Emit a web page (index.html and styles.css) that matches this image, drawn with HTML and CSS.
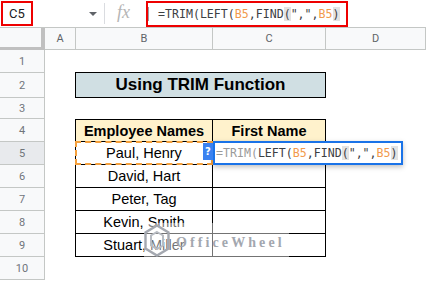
FILE: index.html
```html
<!DOCTYPE html>
<html lang="en">

<head>
    <meta charset="UTF-8" />
    <title>Using TRIM Function</title>
    <link rel="stylesheet" href="styles.css">
</head>

<body>

    <!-- formula bar -->
    <div class="toolbar">
        <div class="namebox">C5</div>
        <span class="caret"></span>
        <span class="divider"></span>
        <span class="fx">fx</span>
        <div class="formula">
            <span class="bar"></span>
            <span class="code">=TRIM(LEFT(<b class="ref">B5</b>,FIND<i class="hl">(</i>",",<b class="ref">B5</b><i class="hl">)</i></span>
        </div>
    </div>

    <!-- sheet grid -->
    <div class="sheet">
        <div class="corner"></div>
        <div class="colhead">A</div>
        <div class="colhead">B</div>
        <div class="colhead">C</div>
        <div class="colhead">D</div>

        <div class="rowhead">1</div>
        <div class="cell"></div><div class="cell"></div><div class="cell"></div><div class="cell"></div>

        <div class="rowhead">2</div>
        <div class="cell"></div>
        <div class="title">Using TRIM Function</div>
        <div class="cell"></div>

        <div class="rowhead">3</div>
        <div class="cell"></div><div class="cell"></div><div class="cell"></div><div class="cell"></div>

        <div class="rowhead">4</div>
        <div class="cell"></div>
        <div class="cell tb th first">Employee Names</div>
        <div class="cell tb th">First Name</div>
        <div class="cell"></div>

        <div class="rowhead active">5</div>
        <div class="cell"></div>
        <div class="cell tb first copied">Paul, Henry</div>
        <div class="cell tb editing">
            <div class="popup">
                <span class="help">?</span>
                <span class="code"><span class="muted">=TRIM(</span>LEFT(<b class="ref">B5</b>,FIND<i class="hl">(</i>",",<b class="ref">B5</b><i class="hl">)</i></span>
            </div>
        </div>
        <div class="cell"></div>

        <div class="rowhead">6</div>
        <div class="cell"></div>
        <div class="cell tb first">David, Hart</div>
        <div class="cell tb"></div>
        <div class="cell"></div>

        <div class="rowhead">7</div>
        <div class="cell"></div>
        <div class="cell tb first">Peter, Tag</div>
        <div class="cell tb"></div>
        <div class="cell"></div>

        <div class="rowhead">8</div>
        <div class="cell"></div>
        <div class="cell tb first">Kevin, Smith</div>
        <div class="cell tb"></div>
        <div class="cell"></div>

        <div class="rowhead">9</div>
        <div class="cell"></div>
        <div class="cell tb first">Stuart, Miller</div>
        <div class="cell tb"></div>
        <div class="cell"></div>

        <div class="rowhead">10</div>
        <div class="cell"></div><div class="cell"></div><div class="cell"></div><div class="cell"></div>

        <!-- watermark -->
        <div class="watermark">
            <svg width="26" height="33" viewBox="0 0 26 33">
                <polygon points="13,1.5 24.5,8.5 24.5,24.5 13,31.5 1.5,24.5 1.5,8.5" fill="none" stroke="#a4a8b0" stroke-width="2.4" />
                <polygon points="13,8 19,11.5 19,21.5 13,25 7,21.5 7,11.5" fill="none" stroke="#b8bcc3" stroke-width="2" />
            </svg>
            <span>OfficeWheel</span>
        </div>
    </div>

</body>

</html>
```

FILE: styles.css
```css
body {
    margin: 0;
    padding: 0;
    width: 426px;
    height: 281px;
    overflow: hidden;
    background: #fff;
    font-family: "Liberation Sans", Arial, sans-serif;
}

*,
*::before,
*::after {
    box-sizing: border-box;
}

/* formula bar */
.toolbar {
    height: 28px;
    display: flex;
    align-items: center;
    border-bottom: 1px solid #c4c7c5;
}

.namebox {
    margin-left: 1px;
    width: 32px;
    height: 25px;
    border: 2px solid #ee0000;
    padding-left: 6px;
    display: flex;
    align-items: center;
    font-family: Roboto, sans-serif;
    font-size: 13px;
    color: #202124;
    align-self: flex-start;
    margin-top: 1px;
}

.caret {
    margin-left: 56px;
    width: 0;
    height: 0;
    border-left: 4px solid transparent;
    border-right: 4px solid transparent;
    border-top: 4px solid #5f6368;
}

.divider {
    margin-left: 7px;
    width: 1px;
    height: 21px;
    background: #dadce0;
}

.fx {
    margin-left: 12px;
    width: 29px;
    font-family: "Liberation Serif", serif;
    font-style: italic;
    font-size: 18px;
    color: #b5b5b5;
    line-height: 1;
    margin-top: -3px;
}

.formula {
    width: 202px;
    height: 26px;
    border: 2px solid #ee0000;
    display: flex;
    align-items: center;
    align-self: flex-start;
    margin-top: 1px;
}

.formula .bar {
    width: 1px;
    height: 14px;
    background: #9aa0a6;
    margin-right: 9px;
}

.code {
    font-family: "DejaVu Sans Mono", monospace;
    font-size: 11.6px;
    color: #3c4043;
    white-space: nowrap;
}

.code b,
.code i {
    font-weight: normal;
    font-style: normal;
}

.ref {
    color: #f29a4c;
}

.hl {
    background: #e3e3e3;
}

.muted {
    color: #9a9a9a;
}

/* sheet */
.sheet {
    position: relative;
    display: grid;
    grid-template-columns: 45px 31px 137px 113px 100px;
    grid-template-rows: 22px 23px 25px 21px 23px 23px 23px 23px 23px 23px 23px;
}

.corner {
    background: #f8f9fa;
    border-right: 4px solid #c0c0c0;
    border-bottom: 3px solid #c0c0c0;
}

.colhead {
    background: #f8f9fa;
    border-right: 1px solid #c4c7c5;
    border-bottom: 1px solid #c4c7c5;
    display: flex;
    align-items: center;
    justify-content: center;
    font-family: Roboto, sans-serif;
    font-size: 11px;
    color: #5f6368;
}

.rowhead {
    background: #f8f9fa;
    border-right: 1px solid #c4c7c5;
    border-bottom: 1px solid #c4c7c5;
    display: flex;
    align-items: center;
    justify-content: center;
    font-family: Roboto, sans-serif;
    font-size: 11px;
    color: #70757a;
}

.rowhead.active {
    background: #e8eaed;
}

.cell {
    display: flex;
    align-items: center;
    justify-content: center;
    font-size: 14.5px;
    color: #000;
}

.title {
    grid-column: span 2;
    margin-left: -1px;
    margin-top: -1px;
    background: #d0dfe3;
    border: 1px solid #000;
    display: flex;
    align-items: center;
    justify-content: center;
    font-weight: bold;
    font-size: 17px;
}

.tb {
    border-right: 1px solid #000;
    border-bottom: 1px solid #000;
}

.tb.first {
    border-left: 1px solid #000;
    margin-left: -1px;
}

.th {
    border-top: 1px solid #000;
    background: #fff2cc;
    font-weight: bold;
}

.copied {
    position: relative;
}

.copied::after {
    content: "";
    position: absolute;
    top: -1px;
    left: -1px;
    right: -1px;
    bottom: -1px;
    border: 2px dashed #f5a03c;
}

.editing {
    position: relative;
}

.popup {
    position: absolute;
    top: -1px;
    left: 0;
    width: 190px;
    height: 24px;
    background: #fff;
    border: 2px solid #1a73e8;
    box-shadow: 0 2px 5px rgba(0, 0, 0, 0.25);
    display: flex;
    align-items: center;
    padding-left: 1px;
    z-index: 2;
}

.help {
    position: absolute;
    left: -12px;
    top: 0;
    width: 10px;
    height: 17px;
    background: #3b82f0;
    color: #fff;
    font-family: "DejaVu Sans", sans-serif;
    font-weight: bold;
    font-size: 10px;
    display: flex;
    align-items: center;
    justify-content: center;
}

/* watermark */
.watermark {
    position: absolute;
    left: 144px;
    top: 195px;
    width: 145px;
    height: 35px;
    display: flex;
    align-items: center;
    gap: 6px;
    background: rgba(255, 255, 255, 0.45);
}

.watermark span {
    font-family: "Liberation Serif", serif;
    font-weight: bold;
    font-size: 14px;
    letter-spacing: 3.1px;
    color: #a3a7af;
    margin-top: 4px;
}
```
